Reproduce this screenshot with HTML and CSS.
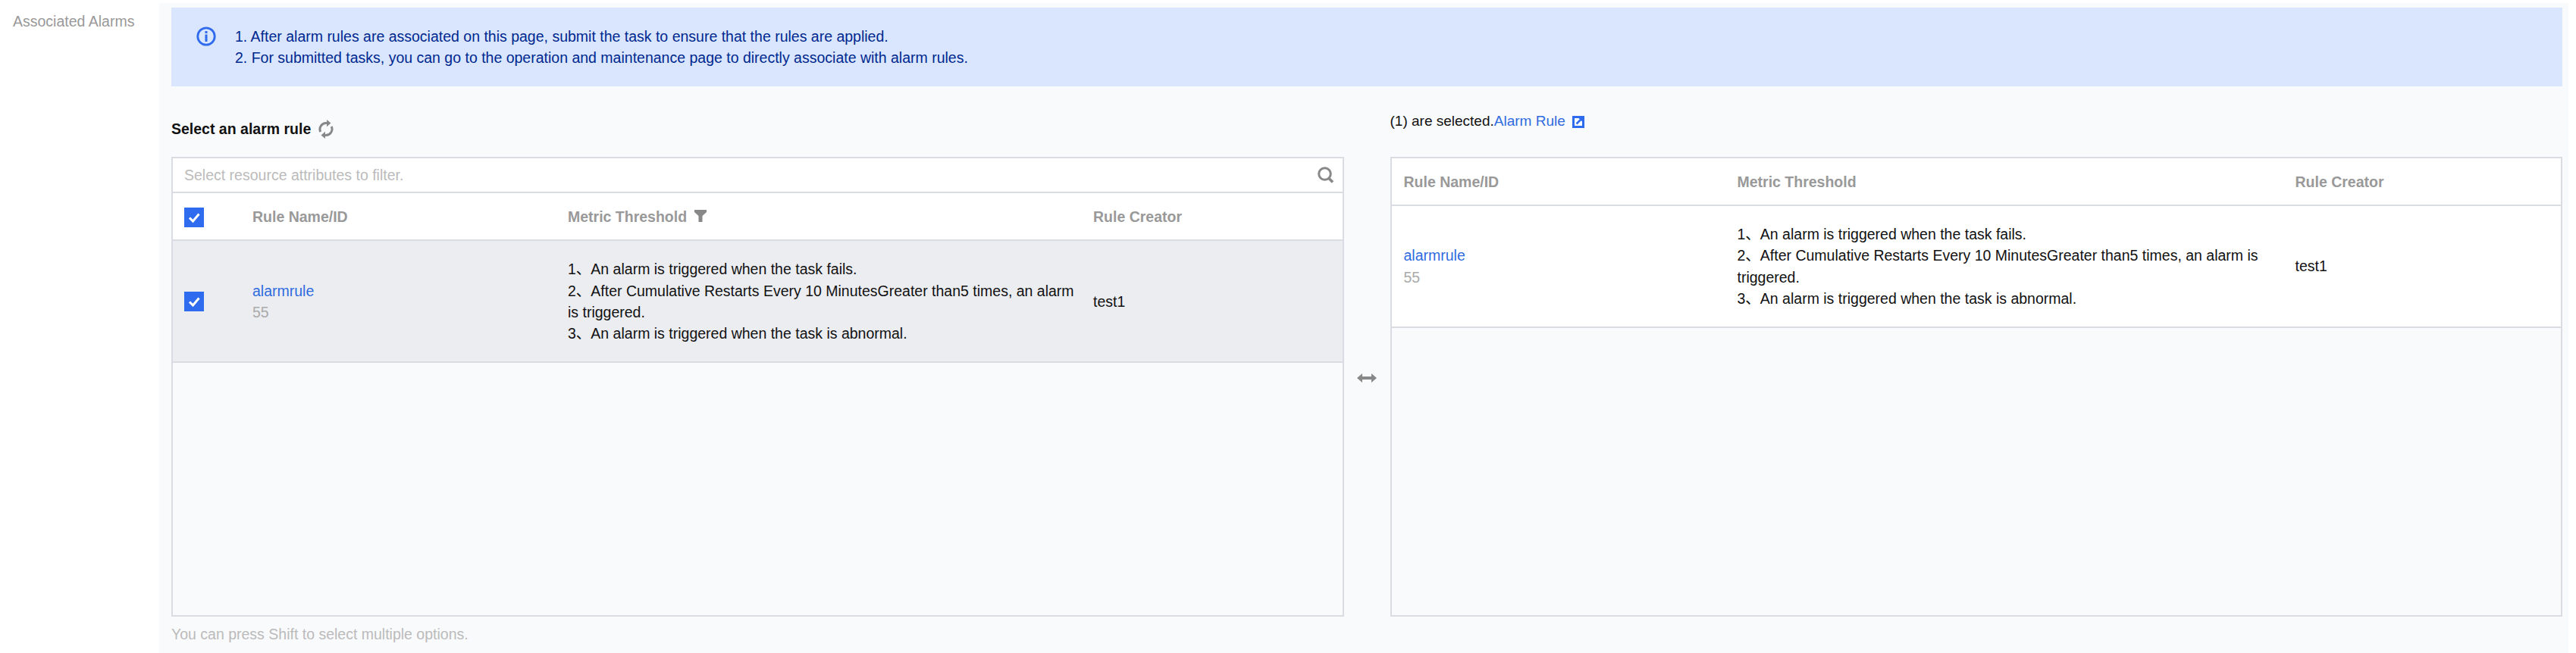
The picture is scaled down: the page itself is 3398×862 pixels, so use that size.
FILE: index.html
```html
<!DOCTYPE html>
<html lang="en">
<head>
<meta charset="utf-8">
<title>Associated Alarms</title>
<link rel="stylesheet" href="styles.css">
</head>
<body>
<div class="page">
  <div class="label">Associated Alarms</div>
  <main class="panel">
    <section class="banner">
      <svg class="banner-icon" viewBox="0 0 26 26" aria-hidden="true"><circle cx="13" cy="13" r="11.200" fill="none" stroke="#2f6bef" stroke-width="2.800"/><rect x="11.500" y="6" width="3" height="3" fill="#2f6bef"/><rect x="11.500" y="10.500" width="3" height="9.500" fill="#2f6bef"/></svg>
      <div>
        <div>1. After alarm rules are associated on this page, submit the task to ensure that the rules are applied.</div>
        <div>2. For submitted tasks, you can go to the operation and maintenance page to directly associate with alarm rules.</div>
      </div>
    </section>
    <div class="transfer">
      <section class="col">
        <div class="head head-left">
          <strong>Select an alarm rule</strong>
          <svg class="refresh" viewBox="0 0 20 25" aria-hidden="true"><path d="M2.800 16A8 8 0 0 1 11 4.600M17.200 9A8 8 0 0 1 9 20.400" fill="none" stroke="#888" stroke-width="3"/><path d="M11 0l5.500 4.600L11 9.200zM9 15.800L3.500 20.400 9 25z" fill="#888"/></svg>
        </div>
        <div class="box">
          <div class="filter">
            <span>Select resource attributes to filter.</span>
            <svg class="search" viewBox="0 0 22 22" aria-hidden="true"><circle cx="9.500" cy="9.500" r="7.800" fill="none" stroke="#888" stroke-width="3"/><path d="M14.500 15l5.500 5.500" stroke="#888" stroke-width="3.600" fill="none"/></svg>
          </div>
          <div class="row row-left row-headline">
            <span class="check"><svg viewBox="0 0 26 26" aria-hidden="true"><path d="M7 13.500l4.500 4.500L19.500 8.500" fill="none" stroke="#fff" stroke-width="3"/></svg></span>
            <span>Rule Name/ID</span>
            <span class="with-icon">Metric Threshold<svg class="funnel" viewBox="0 0 18 16" aria-hidden="true"><path d="M1 0h16v3l-5.500 5v8h-5V8L1 3z" fill="#888"/></svg></span>
            <span>Rule Creator</span>
          </div>
          <div class="row row-left row-body row-selected">
            <span class="check"><svg viewBox="0 0 26 26" aria-hidden="true"><path d="M7 13.500l4.500 4.500L19.500 8.500" fill="none" stroke="#fff" stroke-width="3"/></svg></span>
            <div><a class="link">alarmrule</a><div class="muted">55</div></div>
            <div class="metric">
              <div>1、An alarm is triggered when the task fails.</div>
              <div>2、After Cumulative Restarts Every 10 MinutesGreater than5 times, an alarm is triggered.</div>
              <div>3、An alarm is triggered when the task is abnormal.</div>
            </div>
            <div>test1</div>
          </div>
        </div>
        <div class="footer">You can press Shift to select multiple options.</div>
      </section>
      <div class="swap">
        <svg viewBox="0 0 26 12" aria-hidden="true"><path d="M0 6l7-6v4h12V0l7 6-7 6V8H7v4z" fill="#888"/></svg>
      </div>
      <section class="col">
        <div class="head head-right">
          <span>(1) are selected.</span><a class="link">Alarm Rule</a>
          <svg class="external" viewBox="0 0 16 16" aria-hidden="true"><path d="M0 0h16v16H0z" fill="#2f6bef"/><path d="M3 3h10v10H3z" fill="#fff"/><path d="M8 2.500h5.500V8L8 2.500z" fill="#2f6bef"/><path d="M5.500 10.500L11 5" fill="none" stroke="#2f6bef" stroke-width="2.600"/></svg>
        </div>
        <div class="box">
          <div class="row row-right row-headline">
            <span>Rule Name/ID</span>
            <span>Metric Threshold</span>
            <span>Rule Creator</span>
          </div>
          <div class="row row-right row-body">
            <div><a class="link">alarmrule</a><div class="muted">55</div></div>
            <div class="metric">
              <div>1、An alarm is triggered when the task fails.</div>
              <div>2、After Cumulative Restarts Every 10 MinutesGreater than5 times, an alarm is triggered.</div>
              <div>3、An alarm is triggered when the task is abnormal.</div>
            </div>
            <div>test1</div>
          </div>
        </div>
        <div class="footer"></div>
      </section>
    </div>
  </main>
</div>
</body>
</html>
```

FILE: styles.css
```css
* { box-sizing: border-box; }
html, body { margin: 0; height: 862px; overflow: hidden; background: #fff; }
body {
  font-family: "Liberation Sans", Arial, "Noto Sans CJK SC", sans-serif;
  font-size: 19.500px;
  line-height: 28.330px;
  color: #111;
}
.page { display: flex; height: 862px; }
.label { width: 210px; flex: none; padding: 14px 0 0 17px; color: #999; }
.panel {
  flex: 1;
  margin: 4px 10px 0 0;
  padding: 6px 8px 0 16px;
  background: #f9fafc;
  display: flex;
  flex-direction: column;
}
.banner {
  height: 104px;
  flex: none;
  display: flex;
  align-items: center;
  gap: 25px;
  padding-left: 33px;
  background: #d9e6fd;
  color: #00288f;
}
.banner-icon { width: 26px; height: 26px; flex: none; margin-top: -29px; }
.transfer { flex: 1; display: flex; min-height: 0; }
.col { flex: 1 1 0; min-width: 0; display: flex; flex-direction: column; }
.head { height: 93px; flex: none; display: flex; align-items: center; }
.head-left { padding-top: 20px; }
.head-left strong { font-weight: 700; }
.head-right { font-size: 19px; }
.refresh { width: 20px; height: 25px; margin-left: 10px; }
.external { width: 16px; height: 16px; margin-left: 9px; }
.box { flex: 1; min-height: 0; border: 2px solid #d9dce3; }
.filter {
  height: 46px;
  display: flex;
  align-items: center;
  justify-content: space-between;
  padding: 0 11px 0 15px;
  background: #fff;
  border-bottom: 2px solid #d9dce3;
  color: #bbb;
}
.search { width: 22px; height: 22px; }
.row { display: grid; align-items: center; }
.row-left { grid-template-columns: 90px 416px 693px 1fr; padding-left: 15px; }
.row-right { grid-template-columns: 440px 736px 1fr; padding-left: 16px; }
.row-headline {
  height: 63px;
  padding-top: 2px;
  background: #fff;
  border-bottom: 2px solid #d9dce3;
  color: #999;
  font-weight: 700;
}
.row-body { height: 161px; background: #fff; border-bottom: 2px solid #d9dce3; }
.row-selected { background: #ecedf1; padding-top: 1px; }
.with-icon { display: flex; align-items: center; gap: 9px; }
.funnel { width: 18px; height: 16px; margin-top: -3px; }
.check {
  width: 26px;
  height: 26px;
  background: #2f6bef;
  display: block;
}
.check svg { display: block; width: 26px; height: 26px; }
.metric { padding-right: 24px; }
.link { color: #2f6bdf; }
.muted { color: #aaa; }
.swap { width: 61px; flex: none; display: flex; justify-content: center; padding-top: 379px; }
.swap svg { width: 26px; height: 12px; }
.footer { height: 48px; flex: none; padding-top: 9px; color: #bbb; }
```
